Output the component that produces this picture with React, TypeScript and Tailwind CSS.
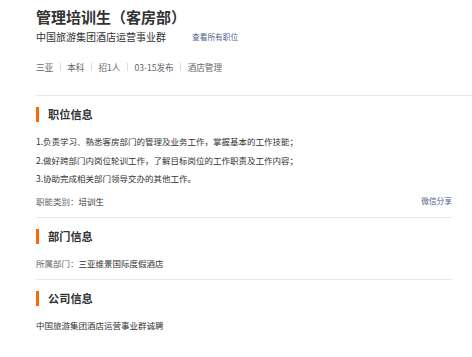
const tags = ["三亚", "本科", "招1人", "03-15发布", "酒店管理"];

const duties = [
  "1.负责学习、熟悉客房部门的管理及业务工作，掌握基本的工作技能；",
  "2.做好跨部门内岗位轮训工作，了解目标岗位的工作职责及工作内容；",
  "3.协助完成相关部门领导交办的其他工作。",
];

function SectionTitle({ title }: { title: string }) {
  return (
    <div className="flex items-center h-[15px]">
      <span className="w-[3px] h-[15px] bg-[#ff6600]" />
      <h3 className="ml-[9px] text-[11.2px] leading-[15px] font-bold text-[#333]">{title}</h3>
    </div>
  );
}

export default function App() {
  return (
    <div
      className="w-[472px] h-[357px] overflow-hidden bg-white pl-[36px]"
      style={{ fontFamily: '"Noto Sans CJK SC", "Noto Sans", sans-serif' }}
    >
      <header className="pt-[6.5px] pb-[21px] border-b border-[#e8e8e8]">
        <h1 className="text-[15px] leading-[20px] font-bold text-[#333]">管理培训生（客房部）</h1>
        <div className="mt-[3.5px] flex items-center h-[14px]">
          <span className="text-[10px] leading-[14px] text-[#333]">中国旅游集团酒店运营事业群</span>
          <span className="ml-[26px] text-[7.7px] leading-[14px] text-[#4f6189]">查看所有职位</span>
        </div>
        <div className="mt-[16px] flex items-center h-[14px] text-[8.6px] leading-[14px] text-[#666]">
          {tags.map((t, i) => (
            <span key={t} className="flex items-center">
              {i > 0 && <span className="mx-[6.5px] w-px h-[8px] bg-[#ddd]" />}
              {t}
            </span>
          ))}
        </div>
      </header>

      <div className="mr-[20px]">
        <section className="pt-[11px] pb-[9px] border-b border-[#e8e8e8]">
          <SectionTitle title="职位信息" />
          <div className="mt-[10px] text-[8.5px] leading-[18.5px] text-[#333]">
            {duties.map((d) => (
              <p key={d}>{d}</p>
            ))}
          </div>
          <div className="mt-[6px] flex items-center justify-between h-[14px] leading-[14px]">
            <p className="text-[8.5px]">
              <span className="text-[#666]">职能类别：</span>
              <span className="text-[#333]">培训生</span>
            </p>
            <span className="text-[7.7px] text-[#4f6189]">微信分享</span>
          </div>
        </section>

        <section className="pt-[11px] pb-[8.5px] border-b border-[#e8e8e8]">
          <SectionTitle title="部门信息" />
          <p className="mt-[12.5px] text-[8.5px] leading-[14px]">
            <span className="text-[#666]">所属部门：</span>
            <span className="text-[#333]">三亚维景国际度假酒店</span>
          </p>
        </section>

        <section className="pt-[11px]">
          <SectionTitle title="公司信息" />
          <p className="mt-[12px] text-[8.5px] leading-[14px] text-[#333]">中国旅游集团酒店运营事业群诚聘</p>
        </section>
      </div>
    </div>
  );
}
